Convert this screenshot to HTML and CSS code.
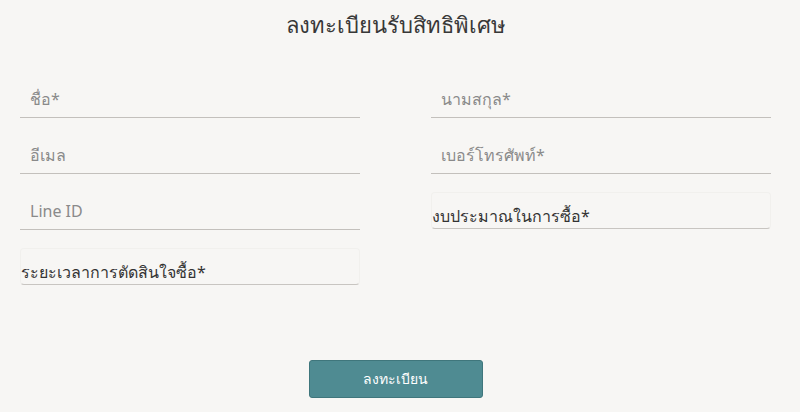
FILE: index.html
```html
<!doctype html>
<html>
	<head>
		<meta charset="utf-8">
		<title>ลงทะเบียนรับสิทธิพิเศษ</title>
		<link rel="stylesheet" href="styles.css">
	</head>
	<body>
		<form class="register">
			<h1 class="title">ลงทะเบียนรับสิทธิพิเศษ</h1>
			<div class="fields">
				<div class="col">
					<input class="field" type="text" placeholder="ชื่อ*">
					<input class="field" type="email" placeholder="อีเมล">
					<input class="field" type="text" placeholder="Line ID">
					<div class="select">ระยะเวลาการตัดสินใจซื้อ*</div>
				</div>
				<div class="col">
					<input class="field" type="text" placeholder="นามสกุล*">
					<input class="field" type="tel" placeholder="เบอร์โทรศัพท์*">
					<div class="select">งบประมาณในการซื้อ*</div>
				</div>
			</div>
			<div class="actions">
				<button class="submit" type="button">ลงทะเบียน</button>
			</div>
		</form>
	</body>
</html>
```

FILE: styles.css
```css
html, body {
    margin: 0;
    padding: 0;
    background: #f7f6f4;
    font-family: "Noto Sans", "DejaVu Sans", sans-serif;
    color: #333;
}
.register {
    width: 751px;
    padding: 8px 0 0 20px;
}
.title {
    margin: 0;
    text-align: center;
    font-size: 22px;
    font-weight: 500;
    color: #383838;
    height: 40px;
    line-height: 32px;
}
.fields {
    display: flex;
    gap: 71px;
    padding-top: 32px;
}
.col {
    width: 340px;
    display: flex;
    flex-direction: column;
}
.field {
    display: block;
    width: 100%;
    box-sizing: border-box;
    height: 38px;
    margin-bottom: 18px;
    border: 0;
    border-bottom: 1px solid #c3c0bc;
    background: transparent;
    padding: 0 10px;
    font-family: inherit;
    font-size: 16px;
    color: #555;
}
.field::placeholder {
    color: #8a8a8a;
}
.select {
    box-sizing: border-box;
    height: 37px;
    padding: 12px 0 0 0;
    border: 1px solid #f1f0ed;
    border-bottom-color: #c8c5c1;
    border-radius: 4px;
    font-size: 16px;
    line-height: 22px;
    color: #333;
}
.actions {
    display: flex;
    justify-content: center;
    padding-top: 75px;
}
.submit {
    width: 174px;
    height: 38px;
    background: #4f8b92;
    border: 1px solid #3f767c;
    border-radius: 3px;
    color: #fff;
    font-family: inherit;
    font-size: 14px;
}
```
